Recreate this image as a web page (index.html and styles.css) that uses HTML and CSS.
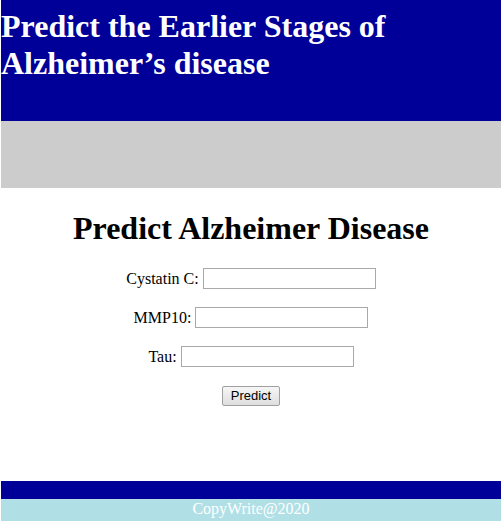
FILE: index.html
```html
<!DOCTYPE html>
<html>
<head>
<meta charset="utf-8">
<link rel="stylesheet" href="styles.css">
</head>
<body>
<div class="page">
  <header class="top">
    <h1 class="title">Predict the Earlier Stages of Alzheimer’s disease</h1>
  </header>
  <div class="band"></div>
  <main class="main">
    <h2 class="heading">Predict Alzheimer Disease</h2>
    <form class="form">
      <div class="row"><label for="c">Cystatin C:</label><input id="c" class="field" type="text"></div>
      <div class="row"><label for="m">MMP10:</label><input id="m" class="field" type="text"></div>
      <div class="row"><label for="t">Tau:</label><input id="t" class="field" type="text"></div>
      <div class="row"><button class="btn" type="button">Predict</button></div>
    </form>
  </main>
  <footer class="foot">
    <div class="foot-bar"></div>
    <div class="foot-copy">CopyWrite@2020</div>
  </footer>
</div>
</body>
</html>
```

FILE: styles.css
```css
html, body {
  margin: 0;
  padding: 0;
  background: #ffffff;
}
body {
  font-family: "Liberation Serif", "Times New Roman", serif;
  font-size: 16px;
  color: #000;
}
.page {
  margin: 0 2px 0 1px;
  height: 521px;
  display: flex;
  flex-direction: column;
}
.top {
  background: #000099;
  height: 121px;
  box-sizing: border-box;
  padding-top: 8px;
}
.title {
  margin: 0;
  color: #ffffff;
  font-size: 32px;
  font-weight: bold;
  line-height: 36.5px;
  width: 420px;
}
.band {
  background: #cccccc;
  height: 67px;
}
.main {
  flex: 1;
  display: flex;
  flex-direction: column;
  align-items: center;
}
.heading {
  margin: 22px 0 0 0;
  font-size: 32px;
  font-weight: bold;
  line-height: 37px;
}
.form {
  margin-top: 21px;
  display: flex;
  flex-direction: column;
  align-items: center;
  gap: 18px;
}
.row {
  display: flex;
  align-items: center;
  justify-content: center;
  gap: 4px;
  height: 21px;
}
.field {
  box-sizing: border-box;
  width: 173px;
  height: 21px;
  border: 1px solid #a9a9a9;
  padding: 1px 2px;
  margin: 0;
  font-size: 13px;
}
.btn {
  box-sizing: border-box;
  height: 20px;
  width: 58px;
  padding: 0;
  font-family: "Liberation Sans", Arial, sans-serif;
  font-size: 13px;
  background: linear-gradient(#f6f6f6, #dedede);
  border: 1px solid #a0a0a0;
  border-radius: 2px;
  color: #000;
}
.foot {
  display: flex;
  flex-direction: column;
}
.foot-bar {
  background: #000099;
  height: 18px;
}
.foot-copy {
  background: #b0e0e6;
  height: 22px;
  color: #ffffff;
  text-align: center;
  font-size: 16px;
  line-height: 20px;
}
```
